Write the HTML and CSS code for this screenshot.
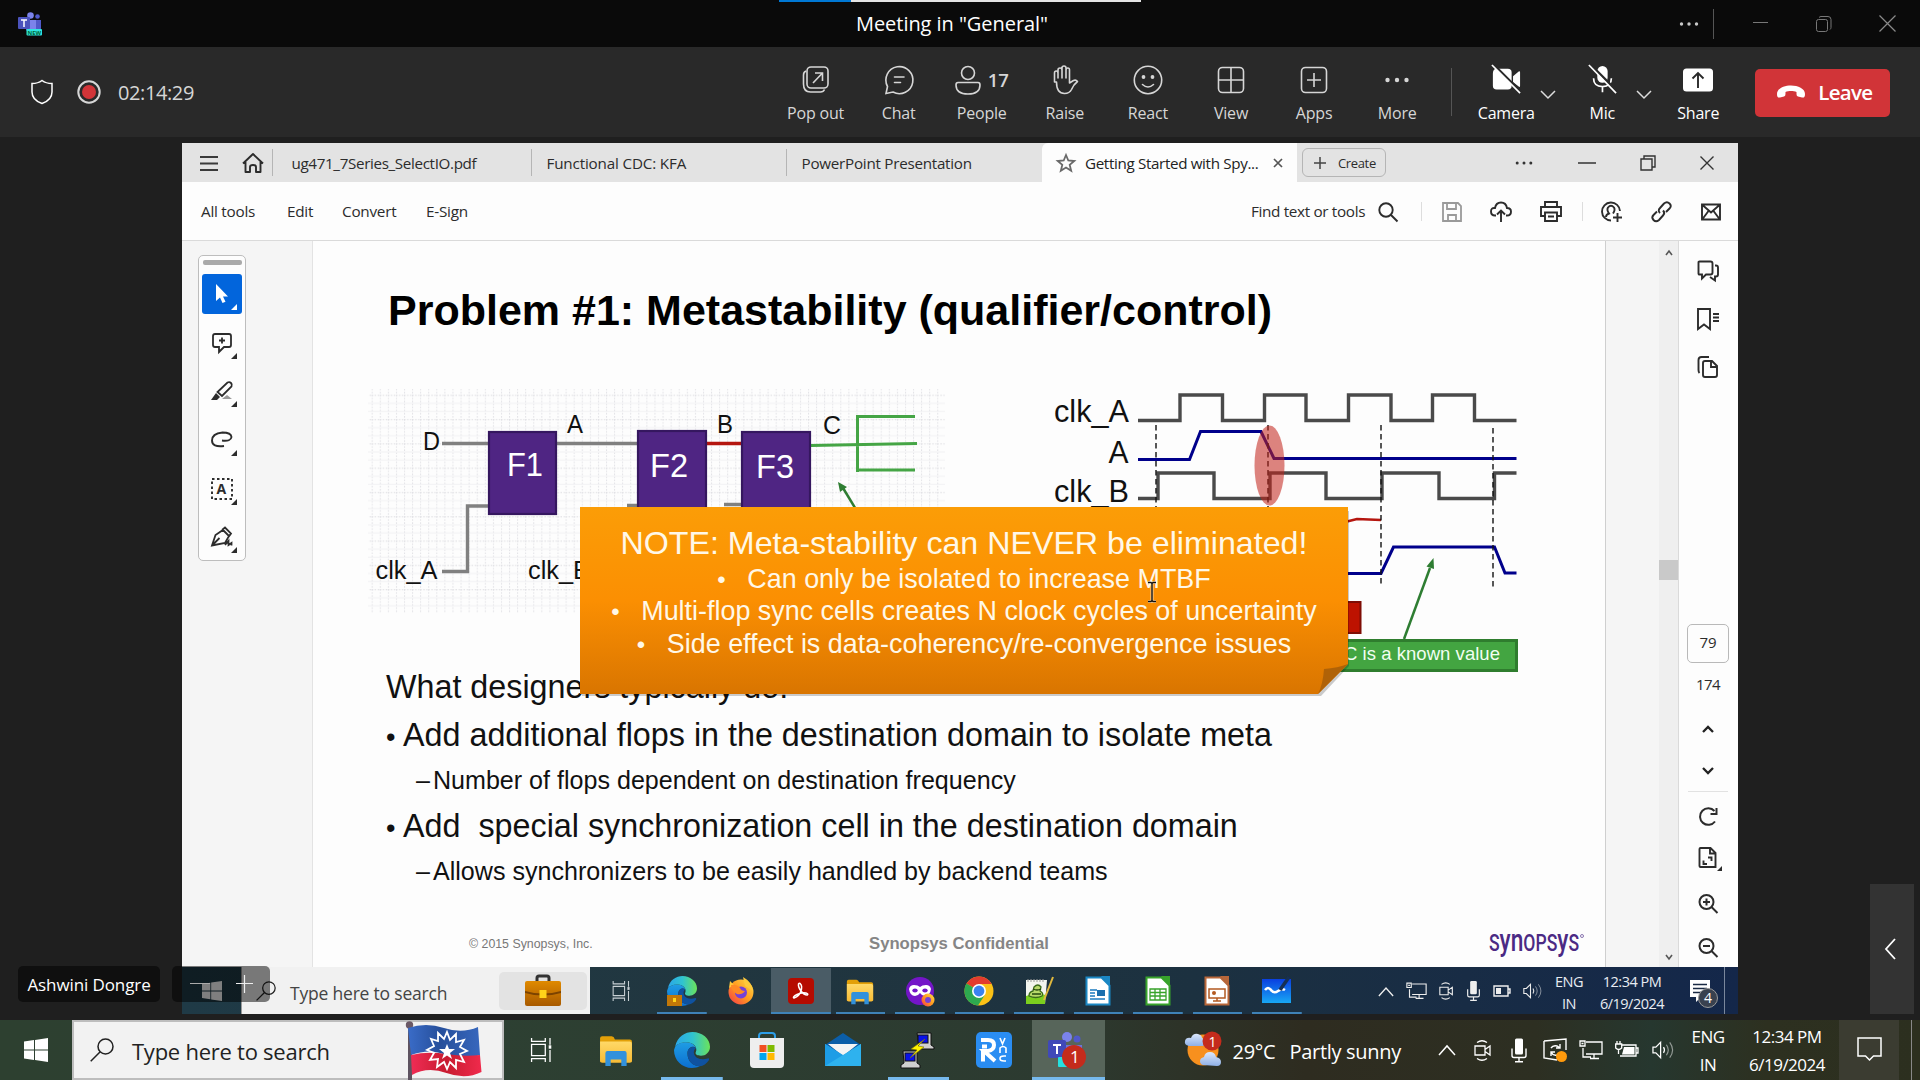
FILE: index.html
```html
<!DOCTYPE html>
<html lang="en">
<head>
<meta charset="utf-8">
<title>Meeting in "General"</title>
<link rel="stylesheet" href="styles.css">
</head>
<body>
<svg class="defs" aria-hidden="true">
  <defs>
    <linearGradient id="edgeA" x1="0" y1="0" x2="1" y2="0"><stop offset="0" stop-color="#2aa6e8"/><stop offset=".5" stop-color="#30c3d0"/><stop offset="1" stop-color="#6be35a"/></linearGradient>
    <linearGradient id="edgeB" x1="0" y1="0" x2="0" y2="1"><stop offset="0" stop-color="#1f9de4"/><stop offset="1" stop-color="#0c6fd0"/></linearGradient>
    <linearGradient id="fold" x1="0" y1="0" x2="0" y2="1"><stop offset="0" stop-color="#ffd968"/><stop offset="1" stop-color="#f8bb35"/></linearGradient>
    <linearGradient id="bag" x1="0" y1="0" x2="0" y2="1"><stop offset="0" stop-color="#e08a00"/><stop offset="1" stop-color="#a85a00"/></linearGradient>
    <linearGradient id="wb" x1="0" y1="0" x2="0" y2="1"><stop offset="0" stop-color="#0a3fe0"/><stop offset="1" stop-color="#18a8f5"/></linearGradient>
    <linearGradient id="flagB" x1="0" y1="0" x2="1" y2="0"><stop offset="0" stop-color="#3a6cc8"/><stop offset=".45" stop-color="#264f9b"/><stop offset="1" stop-color="#3767bd"/></linearGradient>
    <linearGradient id="flagR" x1="0" y1="0" x2="1" y2="0"><stop offset="0" stop-color="#f02c55"/><stop offset=".5" stop-color="#c81c30"/><stop offset="1" stop-color="#f02a4c"/></linearGradient>
    <linearGradient id="fox" x1="1" y1="0" x2="0" y2="1"><stop offset="0" stop-color="#ffe14a"/><stop offset=".5" stop-color="#ff9a1f"/><stop offset="1" stop-color="#f4344c"/></linearGradient>
    <linearGradient id="cloud" x1="0" y1="0" x2="0" y2="1"><stop offset="0" stop-color="#dbe8fb"/><stop offset="1" stop-color="#8fb0e6"/></linearGradient>
    <pattern id="grid" width="8.08" height="24.3" patternUnits="userSpaceOnUse"><path d="M.5 0V24.3" stroke="#e2e2e6" stroke-width="1" stroke-dasharray="1.5 1.5"/><path d="M0 6.5H8.08" stroke="#dcdce0" stroke-dasharray="1.5 1.5"/><path d="M0 14.5H8.08M0 22.5H8.08" stroke="#f1f1f3"/></pattern>
    <symbol id="i-edge" viewBox="0 0 32 32"><path d="M1 13C2.500 11 6 9 11 9c5 0 8 3 8.500 5.500C17 11.500 12 14 12 19c0 7 5 11 11 11.500-2 1-4.500 1.500-7 1.500C7 32 0 25 0 16z" fill="url(#edgeB)"/><path d="M12 19c0-5.500 5-7 7.500-4.500-1.500 1-2.500 3-1.500 5.500 1.500 4 7 5 12 3.500 1-.5 1.500.5 1 1.500-2 3-5 5-8 5.500C17 30 12 26 12 19z" fill="#0f52a0"/><path d="M1 13C3 4 10 0 16.500 0 25 0 32 6 32 13c0 5-4 8-8 8s-5.500-1.500-4.500-3.500C21 14 18 9 11 9 6 9 2.500 11 1 13z" fill="url(#edgeA)"/></symbol>
    <symbol id="i-folder" viewBox="0 0 32 32"><path d="M1 5q0-2 2-2h9q2 0 3 3h14q2 0 2 2v19H1z" fill="#e3a008"/><path d="M1 8h28q2 0 2 2v16q0 2-2 2H3q-2 0-2-2z" fill="url(#fold)"/><path d="M6 31V19q0-2 2-2h16q2 0 2 2v12h-5v-6H11v6z" fill="#3291dc"/></symbol>
    <symbol id="i-taskview" viewBox="0 0 24 28"><path d="M1 0v4h16V0M1 28v-4h16v4M1 7.500h16v13H1zM22.500 0v8M22.500 14v14" fill="none" stroke="currentColor" stroke-width="1.500"/><path d="M21 8.500h3v4h-3z" fill="currentColor"/></symbol>
    <symbol id="i-win" viewBox="0 0 24 24"><path d="M0 3.500 10 2v9.500H0zM11 1.900 24 0v11.500H11zM0 12.500h10V22L0 20.500zM11 12.500h13V24l-13-1.900z" fill="currentColor"/></symbol>
    <symbol id="i-loupe" viewBox="0 0 24 24"><circle cx="15.500" cy="8.500" r="7.500" fill="none" stroke="currentColor" stroke-width="1.500"/><path d="M10.200 13.800.7 23.300" stroke="currentColor" stroke-width="1.500"/></symbol>
    <symbol id="i-meet" viewBox="0 0 18 22"><path d="M1 6.500h10v9H1zM11 10l5-3.500v9L11 12M3 3q5-3.500 10 0M3 19q5 3.500 10 0" fill="none" stroke="currentColor" stroke-width="1.300"/></symbol>
    <symbol id="i-mic" viewBox="0 0 16 24"><rect x="4" y="0" width="8" height="16" rx="1.500" fill="currentColor"/><path d="M1 10v7q0 2 2 2h10q2 0 2-2v-7M8 19v4M4 23.300h8" fill="none" stroke="currentColor" stroke-width="1.400"/></symbol>
    <symbol id="i-monitor" viewBox="0 0 24 20"><path d="M7 2h16v12H7M4 8v9h8M15 14v4M11 18.500h9M1 1h5v5H1zM2.500 3.500h2" fill="none" stroke="currentColor" stroke-width="1.300"/></symbol>
    <symbol id="i-vol" viewBox="0 0 24 20"><path d="M1 7h3l5-5v16l-5-5H1z" fill="none" stroke="currentColor" stroke-width="1.300"/><path d="M12 7q2 3 0 6" fill="none" stroke="currentColor" stroke-width="1.300"/><path d="M15 4.500q4 5.500 0 11M18.500 2q6 8 0 16" fill="none" stroke="currentColor" stroke-width="1.200" opacity=".5"/></symbol>
    <symbol id="i-up" viewBox="0 0 18 12"><path d="m1 11 8-9 8 9" fill="none" stroke="currentColor" stroke-width="1.500"/></symbol>
    <symbol id="i-doc" viewBox="0 0 26 30"><path d="M1.500 1.500h15l8 8v19h-23z" fill="#fff" stroke="currentColor" stroke-width="2"/><path d="M16 0h9v10z" fill="currentColor"/></symbol>
  </defs>
</svg>

<header class="titlebar">
  <svg class="teams-logo" viewBox="0 0 24 24"><circle cx="12.500" cy="3.500" r="3.300" fill="#7b83eb"/><circle cx="19.500" cy="4.500" r="2.300" fill="#5059c9"/><path d="M16 8h7v8q0 3-3 3h-4z" fill="#5059c9"/><path d="M8 8h10v9q-1 4-5 4t-5-4z" fill="#7b83eb"/><rect y="5" width="12" height="12" rx="1" fill="#4b53bc"/><path d="M3 8h6M6 8v7" stroke="#fff" stroke-width="1.500"/><rect x="8.500" y="17" width="15.500" height="6.500" rx="1" fill="#2fe5e0"/><text x="9.500" y="22.600" font-size="6" font-weight="700" textLength="13.500" lengthAdjust="spacingAndGlyphs" fill="#063">NEW</text></svg>
  <div class="share-line"><i></i></div>
  <h1>Meeting in "General"</h1>
  <div class="wincontrols">
    <svg width="20" height="6" viewBox="0 0 20 6"><g fill="#c8c8c8"><circle cx="2.500" cy="3" r="1.700"/><circle cx="10" cy="3" r="1.700"/><circle cx="17.500" cy="3" r="1.700"/></g></svg>
    <i class="rule"></i>
    <svg width="16" height="16"><path d="M0 6.500h15" stroke="#777"/></svg>
    <svg width="16" height="16" fill="none" stroke="#777"><rect x=".5" y="3.500" width="11" height="12" rx="2"/><path d="M3 1.500q1-1 2-1h7q3 0 3 3v8q0 1-1 2"/></svg>
    <svg width="17" height="17"><path d="m.5.500 16 16m0-16-16 16" stroke="#8a8a8a" stroke-width="1.200"/></svg>
  </div>
</header>

<nav class="callbar">
  <svg class="shield" width="22" height="26" viewBox="0 0 22 26" fill="none" stroke="#fff" stroke-width="1.500"><path d="M11 1.500q4 3 10 3V13q0 8-10 11.500Q1 21 1 13V4.500q6 0 10-3z"/></svg>
  <svg class="rec" width="24" height="24"><circle cx="12" cy="12" r="10.700" fill="none" stroke="#d6d6d6" stroke-width="2"/><circle cx="12" cy="12" r="7" fill="#d13438"/></svg>
  <span class="timer">02:14:29</span>
  <div class="actions">
    <div class="act"><svg width="28" height="30" fill="none" stroke="currentColor" stroke-width="1.600"><rect x="5" y="2" width="21" height="21" rx="4"/><path d="M4 6q-2.500 1-2.500 4v9q0 8 7 8h10q3 0 4-2.500M11 18 20.500 8M13 8h7.500v8"/></svg><span>Pop out</span></div>
    <div class="act"><svg width="30" height="30" fill="none" stroke="currentColor" stroke-width="1.600" stroke-linecap="round"><path d="M2 28.500 3.500 21.500A13.500 13.500 0 1 1 9 27zM10.500 12h9.500M10.500 17.500h6"/></svg><span>Chat</span></div>
    <div class="act people"><div><svg width="26" height="30" fill="none" stroke="currentColor" stroke-width="1.600"><circle cx="13" cy="8" r="6.500"/><path d="M3 17.500h20q2 0 2 2.500 0 9-12 9T1 20q0-2.500 2-2.500z"/></svg><b>17</b></div><span>People</span></div>
    <div class="act"><svg width="28" height="30" fill="none" stroke="currentColor" stroke-width="1.600" stroke-linejoin="round"><path d="M3.500 17V8q0-2 1.700-2T7 8v5V5q0-2 2-2t2 2v8V3q0-2 2-2t2 2v10V5q0-2 1.800-2t1.700 2v13l4-2.500q2.500-1 4 1-4 3-6 8-2 4-7 4-8 0-8-11.500z"/></svg><span>Raise</span></div>
    <div class="act"><svg width="30" height="30" fill="none" stroke="currentColor" stroke-width="1.600" stroke-linecap="round"><circle cx="15" cy="15" r="13.700"/><path d="M9.500 19.500q5.500 5 11 0"/><g fill="currentColor" stroke="none"><circle cx="10.500" cy="12" r="1.900"/><circle cx="19.500" cy="12" r="1.900"/></g></svg><span>React</span></div>
    <div class="act"><svg width="28" height="30" fill="none" stroke="currentColor" stroke-width="1.600"><rect x="1.500" y="2.500" width="25" height="25" rx="4"/><path d="M14 2.500v25M1.500 15h25"/></svg><span>View</span></div>
    <div class="act"><svg width="28" height="30" fill="none" stroke="currentColor" stroke-width="1.600"><rect x="1.500" y="2.500" width="25" height="25" rx="4"/><path d="M14 8v14M7 15h14"/></svg><span>Apps</span></div>
    <div class="act"><svg width="28" height="30" fill="currentColor"><circle cx="4.500" cy="15" r="2.200"/><circle cx="14" cy="15" r="2.200"/><circle cx="23.500" cy="15" r="2.200"/></svg><span>More</span></div>
  </div>
  <i class="rule"></i>
  <div class="devices">
    <div class="act cam"><svg width="34" height="32" viewBox="0 0 34 32"><path d="M3 9q0-5 4-5h12q4 0 4 4v14q0 4-4 4H7q-4 0-4-4zM24.500 12l6-5q1.500-1 1.500 1v14q0 2-1.500 1l-6-5z" fill="#fff"/><path d="M4 0 34 30" stroke="#292929" stroke-width="3"/><path d="M2 0 32 30" stroke="#fff" stroke-width="1.800"/></svg><span>Camera</span></div>
    <svg class="chev" width="16" height="10"><path d="m1 1 7 7 7-7" fill="none" stroke="#ddd" stroke-width="1.500"/></svg>
    <div class="act mic"><svg width="32" height="32" viewBox="0 0 32 32"><rect x="11" y="1" width="11" height="18" rx="5.500" fill="#fff"/><path d="M7 14q0 9 9.500 9t9.500-9M16.500 23v6" fill="none" stroke="#fff" stroke-width="1.800"/><path d="m4 0 30 30" stroke="#292929" stroke-width="3"/><path d="m2 0 29 30" stroke="#fff" stroke-width="1.800"/></svg><span>Mic</span></div>
    <svg class="chev" width="16" height="10"><path d="m1 1 7 7 7-7" fill="none" stroke="#ddd" stroke-width="1.500"/></svg>
    <div class="act share"><svg width="30" height="30"><rect y="3.500" width="30" height="23" rx="3.500" fill="#fff"/><path d="M15 23V8M9.500 13.500 15 8l5.500 5.500" fill="none" stroke="#292929" stroke-width="1.900"/></svg><span>Share</span></div>
  </div>
  <button class="leave"><svg width="30" height="16" viewBox="0 0 30 16"><path d="M15 1.500c7 0 14 3 14 8.500 0 3-1 4-3 3.500l-4-1c-1.500-.5-1.500-1.500-1.500-4.500-3-1.300-8-1.300-11 0 0 3 0 4-1.500 4.500l-4 1C2 14 1 13 1 10c0-5.500 7-8.500 14-8.500z" fill="#fff"/></svg>Leave</button>
</nav>

<main class="stage">
  <section class="shared">
    <div class="tabs">
      <svg class="burger" width="18" height="16"><path d="M0 2h18M0 8.500h18M0 15h18" stroke="#3a3a3a" stroke-width="1.800"/></svg>
      <svg class="home" width="22" height="20" fill="none" stroke="#2c2c2c" stroke-width="1.900" stroke-linejoin="round"><path d="M1 10.500 11 1l10 9.500M3.500 9v10h4.500v-5q0-2 3-2t3 2v5h4.500V9"/></svg>
      <div class="tab t1">ug471_7Series_SelectIO.pdf</div>
      <div class="tab t2">Functional CDC: KFA</div>
      <div class="tab t3">PowerPoint Presentation</div>
      <div class="tab on"><svg width="20" height="20"><path d="m10 2 2.300 5.500 6 .5-4.600 3.900 1.500 5.900L10 14.600l-5.200 3.200 1.500-5.900L1.700 8l6-.5z" fill="none" stroke="#6a6a6a" stroke-width="1.800"/></svg><span>Getting Started with Spy...</span><svg class="tx" width="10" height="10"><path d="m1 1 8 8m0-8-8 8" stroke="#555" stroke-width="1.700"/></svg></div>
      <div class="create"><svg width="12" height="12"><path d="M6 0v12M0 6h12" stroke="#444" stroke-width="1.500"/></svg>Create</div>
      <div class="appctl">
        <svg width="18" height="6" fill="#333"><circle cx="2.200" cy="3" r="1.500"/><circle cx="9" cy="3" r="1.500"/><circle cx="15.800" cy="3" r="1.500"/></svg>
        <svg width="18" height="6"><path d="M0 3h18" stroke="#333" stroke-width="1.500"/></svg>
        <svg width="16" height="16" fill="none" stroke="#333" stroke-width="1.400"><path d="M1 4h11v11H1zM4 4V1h11v11h-3"/></svg>
        <svg width="14" height="14"><path d="m.5.500 13 13m0-13-13 13" stroke="#333" stroke-width="1.400"/></svg>
      </div>
    </div>
    <div class="menu">
      <span class="m1">All tools</span><span class="m2">Edit</span><span class="m3">Convert</span><span class="m4">E-Sign</span>
      <span class="find">Find text or tools</span>
      <div class="micons">
        <svg class="s" width="20" height="20" fill="none" stroke="#2c2c2c" stroke-width="1.900"><circle cx="8" cy="8" r="6.700"/><path d="m13 13 6.500 6.500"/></svg>
        <i></i>
        <svg width="20" height="20" fill="none" stroke="#9a9a9a" stroke-width="1.800"><path d="M1 1h15l3 3v15H1zM5 1v6h9V1M6 19v-6h8v6"/></svg>
        <svg width="22" height="22" fill="none" stroke="#2c2c2c" stroke-width="1.900"><path d="M6 14.500H5q-4 0-4-4T5 7q1-5.500 6-5.500T17 7q4 0 4 3.700T17 14.500h-1M11 21V10M7 13.500l4-4 4 4"/></svg>
        <svg width="22" height="21" fill="none" stroke="#2c2c2c" stroke-width="1.900"><path d="M5 6V1h12v5M5 15H1V6h20v9h-4M5 11.500h12V20H5zM8 15.500h6"/></svg>
        <i class="b"></i>
        <svg width="22" height="22" fill="none" stroke="#2c2c2c" stroke-width="1.900"><path d="M19 10A9 9 0 1 0 10 19.500M5 16q0-2.500 3-3.500Q5.500 9 7 6.500q3-3.500 6 0 1.500 2.500-1 6M16.500 12v9M12 16.500h9"/></svg>
        <svg width="22" height="22" fill="none" stroke="#2c2c2c" stroke-width="1.900"><path d="m9 12q-2.500-2.500 0-5l4-4.500q3-2.500 5.500 0t0 5L15 11M12 9.500q2.500 2.500 0 5L8 19q-3 2.500-5.500 0t0-5L6 10.500"/></svg>
        <svg width="20" height="18" fill="none" stroke="#2c2c2c" stroke-width="1.900"><path d="M1 1.500h18v15H1zM1.500 2l8.500 7.500L18.500 2M1.500 16l6-8M18.500 16l-6-8"/></svg>
      </div>
    </div>

    <div class="viewer">
      <div class="gutter">
        <div class="palette">
          <i class="grip"></i>
          <div class="tool sel"><svg width="20" height="22"><path d="M4 1v17l4-3.500 2.500 5.500 3-1.200L11 13.500h5z" fill="#fff"/></svg></div>
          <div class="tool"><svg width="20" height="20" fill="none" stroke="#2c2c2c" stroke-width="1.800"><path d="M3 1h14q2 0 2 2v9q0 2-2 2h-5l-5 5v-5H3q-2 0-2-2V3q0-2 2-2zM10 4.500v6M7 7.500h6"/></svg></div>
          <div class="tool"><svg width="22" height="20" fill="none" stroke="#2c2c2c" stroke-width="1.800"><path d="M11 18h10l-5-4z" fill="#9a9a9a" stroke="none"/><path d="M16.500 1.500q2-1 3.500.5t.5 3.500L11 15l-4.500-4z"/><path d="m5 12 4 4-3 3H0z" fill="#2c2c2c" stroke="none"/></svg></div>
          <div class="tool"><svg width="22" height="18" fill="none" stroke="#2c2c2c" stroke-width="1.900"><path d="M11 9.500q9 1 9.500-3.500Q20 1.500 11.500 1.500 1 2.500 1 9.500q0 7 12 5.500"/></svg></div>
          <div class="tool"><svg width="22" height="22"><rect x="1" y="1" width="20" height="20" fill="none" stroke="#2c2c2c" stroke-width="1.900" stroke-dasharray="2.500 2.500"/><text x="5.500" y="16" font-size="14" font-weight="700" fill="#2c2c2c">A</text></svg></div>
          <div class="tool"><svg width="22" height="20" fill="none" stroke="#2c2c2c" stroke-width="1.800"><path d="M1 18.500 4.500 8 12 3l6 6-4 7zM1 18.500l7.500-7.500M11 3l3-2.500 6 6-2.500 3.500M14 18l3.500-4v4l3-2v2.500"/></svg></div>
        </div>
      </div>

      <article class="slide">
        <h2>Problem #1: Metastability (qualifier/control)</h2>
        <div class="figures">
          <svg class="circuit" viewBox="368 389 577 224" width="577" height="224">
            <rect x="368" y="389" width="577" height="224" fill="url(#grid)"/>
            <g fill="none" stroke="#808080" stroke-width="3.400"><path d="M442 443.500h46M557 443.500h80M442 571.500h25.500V506H488M627 505.500h10M724 504.500h17"/></g>
            <path d="M707 443.500h34" stroke="#b5160f" stroke-width="3.400"/>
            <path d="m811 445.500 106-2M857.500 415v57M857 416.500h58M857 470h58" fill="none" stroke="#45a545" stroke-width="3"/>
            <path d="m860 516-17-28" stroke="#2e7d32" stroke-width="2.500"/><path d="m838 482 9 5-7 5z" fill="#2e7d32"/>
            <g fill="#4f2583" stroke="#35175f" stroke-width="2.200"><rect x="489" y="432" width="67" height="82"/><rect x="638" y="431" width="68" height="83"/><rect x="742" y="432" width="68" height="82"/></g>
            <g fill="#fff" font-size="32.500"><text x="507" y="476" textLength="36" lengthAdjust="spacingAndGlyphs">F1</text><text x="650" y="477" textLength="38" lengthAdjust="spacingAndGlyphs">F2</text><text x="756" y="478" textLength="38" lengthAdjust="spacingAndGlyphs">F3</text></g>
            <g fill="#111" font-size="25.500"><text x="423" y="450" textLength="17" lengthAdjust="spacingAndGlyphs">D</text><text x="567" y="433" textLength="16" lengthAdjust="spacingAndGlyphs">A</text><text x="717" y="433" textLength="16" lengthAdjust="spacingAndGlyphs">B</text><text x="823" y="434" textLength="18" lengthAdjust="spacingAndGlyphs">C</text><text x="375.500" y="579" textLength="62" lengthAdjust="spacingAndGlyphs">clk_A</text><text x="528" y="579" textLength="62" lengthAdjust="spacingAndGlyphs">clk_B</text></g>
          </svg>
          <svg class="timing" viewBox="1050 389 470 285" width="470" height="285">
            <g fill="#111" font-size="31"><text x="1054" y="422" textLength="75" lengthAdjust="spacingAndGlyphs">clk_A</text><text x="1108.500" y="463" textLength="20" lengthAdjust="spacingAndGlyphs">A</text><text x="1054" y="502" textLength="75" lengthAdjust="spacingAndGlyphs">clk_B</text></g>
            <path d="M1138 420.500h42V395h42.500v25.500h42V395h41.500v25.500h42.500V395h42.500v25.500h41.500V395h42v25.500h42M1138 498.500h20V473h56v25.500h56V473h56v25.500h56V473h57v25.500h55.500V473h22" fill="none" stroke="#4a4a4a" stroke-width="3.400"/>
            <path d="M1138 459.500h51.500l11-28h60.500l13 27h242.500M1340 573.500h41l12.500-26.500h101l10.500 26h11.500" fill="none" stroke="#00008b" stroke-width="3"/>
            <path d="m1345 522 12-3 24 1" fill="none" stroke="#b5160f" stroke-width="2.600"/>
            <path d="M1156 425v90M1268 425v90M1381 425v159M1493 428v160" stroke="#111" stroke-width="1.400" stroke-dasharray="5.500 3.500"/>
            <ellipse cx="1269.500" cy="465.500" rx="15" ry="40" fill="#c3231b" fill-opacity=".56"/>
            <rect x="1330" y="602" width="30.500" height="31" fill="#bd1200" stroke="#7e0d05" stroke-width="2"/>
            <rect x="1331" y="640.500" width="185.500" height="30" fill="#43a541" stroke="#2f7d2e" stroke-width="3"/>
            <path d="m1404 639 26-71" stroke="#2e7d32" stroke-width="2.500"/><path d="m1433.500 558 .5 11-7.500-2.500z" fill="#2e7d32"/>
            <text x="1344" y="660" font-size="18.500" fill="#f2fff2" textLength="156">C is a known value</text>
          </svg>
        </div>
        <div class="copy">
          <p class="l1">What designers typically do:</p>
          <p class="l2"><b>•</b>Add additional flops in the destination domain to isolate meta</p>
          <p class="l3"><i>–</i>Number of flops dependent on destination frequency</p>
          <p class="l2"><b>•</b>Add&nbsp; special synchronization cell in the destination domain</p>
          <p class="l3"><i>–</i>Allows synchronizers to be easily handled by backend teams</p>
        </div>
        <footer>
          <span class="copyright">© 2015 Synopsys, Inc.</span>
          <strong>Synopsys Confidential</strong>
          <svg class="brand" width="96" height="28"><text x="0" y="21" textLength="90" lengthAdjust="spacingAndGlyphs">S<tspan class="tall">yn</tspan>OPS<tspan class="tall">y</tspan>S</text><circle cx="93" cy="6" r="1.500" fill="none" stroke="#8a76b0"/></svg>
        </footer>
        <aside class="note">
          <svg class="paper" width="780" height="200"><defs><linearGradient id="pg" x1="0" y1="0" x2="0" y2="1"><stop offset="0" stop-color="#fb9d07"/><stop offset=".5" stop-color="#fb8f02"/><stop offset="1" stop-color="#d97500"/></linearGradient></defs><path d="M2 4h767v155l-28 30H2z" fill="#000" opacity=".2"/><path d="M0 0h768v157l-30 30H0z" fill="url(#pg)"/><path d="M768 157q-10 4-24 5-1 15-6 25z" fill="#b06207"/></svg>
          <div class="notetext">
            <h3>NOTE: Meta-stability can NEVER be eliminated!</h3>
            <p><b>•</b>Can only be isolated to increase MTBF</p>
            <p><b>•</b>Multi-flop sync cells creates N clock cycles of uncertainty</p>
            <p><b>•</b>Side effect is data-coherency/re-convergence issues</p>
          </div>
          <svg class="ibeam" width="10" height="22"><path d="M1 1.500h3l1 1 1-1h3M5 2.500v17M1 20.500h3l1-1 1 1h3" fill="none" stroke="#fff" stroke-width="3" opacity=".6"/><path d="M1 1.500h3l1 1 1-1h3M5 2.500v17M1 20.500h3l1-1 1 1h3" fill="none" stroke="#111" stroke-width="1.400"/></svg>
        </aside>
      </article>

      <div class="backdrop"></div>
      <div class="scroll">
        <svg width="8" height="7"><path d="m1 6 3-4 3 4" fill="none" stroke="#555" stroke-width="1.600"/></svg>
        <i></i>
        <svg width="8" height="7"><path d="m1 1 3 4 3-4" fill="none" stroke="#555" stroke-width="1.600"/></svg>
      </div>
      <div class="rail">
        <svg class="r1" width="22" height="22" fill="none" stroke="#2c2c2c" stroke-width="1.900"><path d="M2.500 1.500h11q2 0 2 2v9q0 2-2 2H9l-4 4v-4H2.500q-1 0-1-1v-11q0-1 1-1zM18 5.500h1q2 0 2 2v7q0 2-2 2h-1v4l-5-3.500"/></svg>
        <svg class="r2" width="22" height="22" fill="none" stroke="#2c2c2c" stroke-width="1.900"><path d="M1 1h12v20l-6-4.500L1 21zM16 6h6M16 9.500h6M16 13h6"/></svg>
        <svg class="r3" width="22" height="22" fill="none" stroke="#2c2c2c" stroke-width="1.900"><path d="M6 7q0-2 2-2h7l5 5v9q0 2-2 2H8q-2 0-2-2zM14 5v6h6M2.500 17Q1.500 16 1.500 14V4q0-3 3-3H12"/></svg>
        <span class="page">79</span>
        <span class="total">174</span>
        <svg class="r4" width="12" height="8"><path d="m1 7 5-5 5 5" fill="none" stroke="#222" stroke-width="2.300"/></svg>
        <svg class="r5" width="12" height="8"><path d="m1 1 5 5 5-5" fill="none" stroke="#222" stroke-width="2.300"/></svg>
        <i class="hr"></i>
        <svg class="r6" width="20" height="20" fill="none" stroke="#2c2c2c" stroke-width="2"><path d="M17 14.500a8.300 8.300 0 1 1-.5-10.500M18.500 1v6h-6"/></svg>
        <svg class="r7" width="26" height="26" fill="none" stroke="#2c2c2c" stroke-width="1.900"><path d="M5.500 2h10l5 5v14h-15q-1 0-1-1V3q0-1 1-1zM15 2v5.500h5.500M13 11.500h3.500V15M12 18H8.500v-3.500"/><path d="M27 20v5h-5z" fill="#2c2c2c" stroke="none"/></svg>
        <svg class="r8" width="20" height="20" fill="none" stroke="#2c2c2c" stroke-width="2"><circle cx="8.500" cy="8" r="7"/><path d="m13.500 13 6 6M5 8h7M8.500 4.500v7"/></svg>
        <svg class="r9" width="20" height="20" fill="none" stroke="#2c2c2c" stroke-width="2"><circle cx="8.500" cy="8" r="7"/><path d="m13.500 13 6 6M5 8h7"/></svg>
      </div>
    </div>

    <div class="innerbar">
      <div class="istart"><svg width="20" height="20"><use href="#i-win"/></svg></div>
      <div class="isearch"><svg width="20" height="20"><use href="#i-loupe"/></svg><span>Type here to search</span>
        <div class="tile"><svg width="38" height="32"><path d="M13 6V3q0-2 2-2h8q2 0 2 2v3" fill="none" stroke="#333" stroke-width="3"/><rect x="1" y="6" width="36" height="25" rx="2" fill="url(#bag)"/><path d="M1 16q18 5 36 0v2q-18 5-36 0z" fill="#7c4300"/><rect x="15.500" y="15" width="7" height="8" fill="#ffd31a"/></svg></div></div>
      <div class="iapps">
        <div><svg width="20" height="20" class="pale"><use href="#i-taskview"/></svg></div>
        <div class="run"><svg width="30" height="30"><use href="#i-edge"/><rect x="0" y="19" width="15" height="11" fill="#c27708"/><rect x="6" y="22" width="3" height="4" fill="#ffd31a"/></svg></div>
        <div><svg width="28" height="30"><circle cx="14" cy="16" r="12.500" fill="url(#fox)"/><path d="M2 12 3 5l4 4zM16 1q9 5 10 14l-8-5z" fill="#ffc93b"/><circle cx="14" cy="16.500" r="6" fill="#7542d6"/><path d="M4 9q6-1 9 3 1 3 5 3-3 4-8 3-6-3-6-9z" fill="#ff8a25"/></svg></div>
        <div class="cur"><svg width="28" height="28"><rect x="1" y="1" width="26" height="26" rx="4" fill="#b50b00"/><path d="M13.500 7q2 2 .5 7t-7 7q-2-1 3-3.500t9-1.500q3 1 1 2-3 0-6-4t-2.500-7q1-1.500 2 0z" fill="none" stroke="#fff" stroke-width="1.500"/></svg></div>
        <div class="run"><svg width="28" height="28"><use href="#i-folder"/></svg></div>
        <div class="run"><svg width="30" height="32"><circle cx="15" cy="16" r="14" fill="#7415c8"/><path d="M4 14q1-4 5-4t6 2q2-2 6-2t5 4q-1 7-6 7-3 0-5-3-2 3-5 3-5 0-6-7z" fill="#fff"/><ellipse cx="10" cy="15.500" rx="2.700" ry="2" fill="#7415c8"/><ellipse cx="20" cy="15.500" rx="2.700" ry="2" fill="#7415c8"/><circle cx="23" cy="25" r="6.500" fill="url(#fox)"/><circle cx="23" cy="25" r="3" fill="#7542d6"/></svg></div>
        <div class="run"><svg width="30" height="30"><circle cx="15" cy="15" r="14.500" fill="#fbc116"/><path d="M15 15 2.500 7.500A14.500 14.500 0 0 1 27.600 8H15z" fill="#e33b2e"/><path d="M15 15 2.500 7.500A14.500 14.500 0 0 0 14 29.500l6.500-10z" fill="#2da94f"/><circle cx="15" cy="15" r="7" fill="#fff"/><circle cx="15" cy="15" r="5.400" fill="#3b82f0"/></svg></div>
        <div class="run"><svg width="30" height="30"><path d="M2 4h21l-2 24H2z" fill="#f3f5ee"/><path d="M2 20q10-4 19.500-1L21 28H2z" fill="#7ccf1e"/><path d="M5 20q0-4 4-5l1-4q4-4 7 0l-1 4q4 2 2 5-6 3-13 0z" fill="#b8d96a" stroke="#3a6a1a" stroke-width="1.300"/><path d="M9 13q4 2 8 0M8 18h9" stroke="#24480e" stroke-width="1.300" fill="none"/><path d="M29 1 20 24" stroke="#e0b83d" stroke-width="2"/><path d="M4 3v3M7 3v3M10 3v3M13 3v3M16 3v3M19 3v3" stroke="#999"/></svg></div>
        <div class="run"><svg width="26" height="30" class="c-blue"><use href="#i-doc"/><path d="M5 14h7M5 17h5M5 20h5M5 23h15" stroke="#1b7bc0" stroke-width="1.500"/><path d="M12 14h8v6h-8z" fill="#1b6fae"/></svg></div>
        <div class="run"><svg width="26" height="30" class="c-green"><use href="#i-doc"/><path d="M5 13h16v11H5zM5 16.500h16M5 20h16M10 13v11M15 13v11" fill="none" stroke="#38a32b" stroke-width="1.300"/></svg></div>
        <div class="run"><svg width="26" height="30" class="c-orange"><use href="#i-doc"/><path d="M5 13h16v9H5zM13 22v3M9 25h8" fill="none" stroke="#b35a22" stroke-width="1.500"/><circle cx="10" cy="17" r="2" fill="#b35a22"/></svg></div>
        <div class="run"><svg width="30" height="30"><rect x="0" y="3" width="29" height="24" fill="url(#wb)"/><path d="M3 14q3-4 6 0t7 1 7-1" fill="none" stroke="#fff" stroke-width="2.500"/><path d="m27 1-9 13" stroke="#163055" stroke-width="3.500"/></svg></div>
      </div>
      <div class="itray">
        <svg width="16" height="11"><use href="#i-up"/></svg>
        <svg width="21" height="18"><use href="#i-monitor"/></svg>
        <svg width="15" height="20"><use href="#i-meet"/></svg>
        <svg width="15" height="20"><use href="#i-mic"/></svg>
        <svg width="18" height="12" fill="none" stroke="#eee" stroke-width="1.400"><path d="M1 1h14v10H1zM15 4h2v4h-2"/><path d="M3 3h5v6H3z" fill="#eee" stroke="none"/></svg>
        <svg width="20" height="18"><use href="#i-vol"/></svg>
      </div>
      <div class="stack lang">ENG<br>IN</div>
      <div class="stack clock">12:34 PM<br>6/19/2024</div>
      <svg class="inotif" width="32" height="32"><path d="M1 4h20v17H12l-5 5v-5H1z" fill="#fff"/><path d="M4 8.500h14M4 12.500h14M4 16.500h9" stroke="#1a2a44" stroke-width="1.500"/><circle cx="19" cy="22" r="9.500" fill="#39414f" stroke="#999"/><text x="15" y="27" font-size="14" fill="#fff">4</text></svg>
      <i class="ipeek"></i>
    </div>
  </section>

  <div class="presenter"><span class="who">Ashwini Dongre</span><span class="ghost"><svg width="60" height="20"><path d="M0 9.500h20" stroke="#aaa"/><path d="M46 9.500h17M54.500 1v18" stroke="#eee" stroke-width="1.200"/></svg></span></div>
  <div class="drawer"><svg width="12" height="22"><path d="M11 1 2 11l9 10" fill="none" stroke="#fff" stroke-width="1.800"/></svg></div>
</main>

<footer class="taskbar">
  <div class="start"><svg width="24" height="24"><use href="#i-win"/></svg></div>
  <div class="search"><svg width="24" height="24"><use href="#i-loupe"/></svg><span>Type here to search</span>
    <svg class="flag" width="78" height="59"><path d="M5 4v55" stroke="#5e5360" stroke-width="4"/><circle cx="4.500" cy="4" r="3.700" fill="#6b5966"/><path d="M3 7q18-6 36 0t34-1l2 28q-18 7-34 0T6 34z" fill="url(#flagB)"/><path d="M6 34q17-4 35-1t34 1l1.500 17q-16 8-35 1T7 54z" fill="url(#flagR)"/><path d="m42 11 3 8 6-6v8l8-2-4 7 7 4-7 3 4 8-8-2v8l-6-6-3 7-3-7-7 5 1-8-8 1 4-7-7-3 7-4-3-7 7 2v-8l6 6z" fill="none" stroke="#fff" stroke-width="1.800"/><path d="m42 23 2 5h6l-5 4 2 6-5-3.500L37 38l2-6-5-4h6z" fill="#fff"/></svg>
  </div>
  <div class="apps">
    <div><svg width="24" height="24" class="white"><use href="#i-taskview"/></svg></div>
    <div><svg width="34" height="34"><use href="#i-folder"/></svg></div>
    <div class="run"><svg width="36" height="36"><use href="#i-edge"/></svg></div>
    <div><svg width="36" height="36"><path d="M10 9V4q0-3 3-3h10q3 0 3 3v5" fill="none" stroke="#2d9ee8" stroke-width="2"/><path d="M1 6h34v26q0 4-4 4H5q-4 0-4-4z" fill="#eee"/><path d="M10.500 13h7v7h-7z" fill="#f25022"/><path d="M18.500 13h7v7h-7z" fill="#7fba00"/><path d="M10.500 21h7v7h-7z" fill="#00a4ef"/><path d="M18.500 21h7v7h-7z" fill="#ffb900"/></svg></div>
    <div><svg width="36" height="34"><path d="M18 0 36 12v8H0v-8z" fill="#0b5ea8"/><path d="M3 11h30L18 23z" fill="#f4f4f4"/><path d="m0 11 18 12 18-12v22H0z" fill="#3cc3f2"/><path d="m0 11 36 22H0z" fill="#1d9de6"/><path d="M0 33 36 11v22z" fill="#2eb2ee"/></svg></div>
    <div class="run"><svg width="36" height="36"><g stroke="#111"><path d="M17 1h14v12l3 2v2H15l4-4z" fill="#cfcfcf"/><rect x="18" y="3" width="10" height="8" fill="#0a12e8"/><path d="M3 19h14v12l3 2v3H1v-3l3-2z" fill="#cfcfcf"/><rect x="5" y="21" width="10" height="8" fill="#0a12e8"/></g><path d="m25 7-14 10 6 1-7 8 14-11-6-1z" fill="#fff200" stroke="#776f00" stroke-width=".6"/></svg></div>
    <div><svg width="36" height="36"><rect width="36" height="36" rx="5" fill="#2a8df2"/><path d="M5 8h7q6 0 6 5t-6 6H8l11 10M6 14.500h5M7 19v10.500" fill="none" stroke="#fff" stroke-width="4"/><path d="m24 6 2.500 6L29 6M24 21v-5q3-3 6 0v5M30 24h-2q-4 0-4 2.500t4 2.500h2" fill="none" stroke="#fff" stroke-width="1.600"/></svg></div>
    <div class="cur"><svg width="40" height="38"><circle cx="21" cy="6" r="5" fill="#7b83eb"/><circle cx="31" cy="8" r="3.500" fill="#5059c9"/><path d="M19 14h17v12H19z" fill="#6b73d8"/><rect x="2" y="9" width="18" height="18" rx="2" fill="#4049b8"/><path d="M7 14h8M11 14v9" stroke="#fff" stroke-width="2"/><rect x="12" y="26" width="9" height="10" rx="1" fill="#25e0e0"/><circle cx="28" cy="26" r="12" fill="#c42b1c"/><text x="24" y="32" font-size="17" fill="#fff">1</text></svg></div>
  </div>
  <div class="weather"><svg width="40" height="38"><circle cx="19" cy="19" r="15.500" fill="#f7901e"/><path d="M5 15q-5-1-4-5t6-3q2-5 7-4 4 1 4 4 4 1 3 5 0 3-3 3z" fill="url(#cloud)"/><path d="M19 34q-3-1-3-4t4-4q1-5 6-5t6 5q5 1 5 5t-4 4z" fill="url(#cloud)"/><circle cx="28" cy="10" r="9.500" fill="#c42b1c"/><text x="24.500" y="15.500" font-size="14" fill="#fff">1</text></svg><span class="deg">29°C</span><span>Partly sunny</span></div>
  <div class="tray">
    <svg width="18" height="12"><use href="#i-up"/></svg>
    <svg width="18" height="23"><use href="#i-meet"/></svg>
    <svg width="16" height="25"><use href="#i-mic"/></svg>
    <svg width="24" height="24" fill="none" stroke="#fff" stroke-width="1.400"><path d="M1 3 23 1v11M14 22 1 20V3M8 10q2-3 6-2l3 2M17 6v4h-4M8 18v-4h4M8 14q2 4 6 3"/><circle cx="18.500" cy="18.500" r="5.500" fill="#ff9a0c" stroke="none"/></svg>
    <svg width="24" height="20"><use href="#i-monitor"/></svg>
    <svg width="24" height="18" fill="none" stroke="#fff" stroke-width="1.300"><path d="M7 4h14v11H5M21 7h2v5h-2M2 0v3M5 0v3M.7 3h6v4q-3 3-6 0zM3.500 9v4"/><path d="M9 6h10.500v7.500H7z" fill="#fff" stroke="none"/></svg>
    <svg width="23" height="20"><use href="#i-vol"/></svg>
  </div>
  <div class="stack lang">ENG<br>IN</div>
  <div class="stack clock">12:34 PM<br>6/19/2024</div>
  <div class="notif"><svg width="25" height="26"><path d="M1 1h23v18h-7.500l-4 4-4-4H1z" fill="none" stroke="#fff" stroke-width="1.500"/></svg></div>
  <i class="peek"></i>
</footer>
</body>
</html>
```
FILE: styles.css
```css
* { box-sizing: border-box; }
body { margin: 0; width: 1920px; height: 1080px; overflow: hidden; background: #1f1f1f; color: #fff; font-family: "Open Sans", "Noto Sans", sans-serif; white-space: nowrap; }
svg { display: block; flex: none; overflow: visible; }
.defs { position: absolute; width: 0; height: 0; }
h1, h2, h3, p { margin: 0; font-weight: 400; }

/* title bar */
.titlebar { position: relative; display: flex; align-items: center; height: 47px; background: #0a0a0a; }
.teams-logo { width: 24px; height: 24px; margin-left: 18px; }
.share-line { position: absolute; left: 779px; top: 0; width: 362px; height: 2px; background: #e4e4e4; }
.share-line i { display: block; width: 72px; height: 2px; background: #0078d4; }
.titlebar h1 { flex: none; width: 194px; margin-left: 814px; font-size: 20px; letter-spacing: -.05px; }
.wincontrols { display: flex; align-items: center; margin-left: 629px; }
.wincontrols .rule { width: 1px; height: 30px; margin: 0 39px 0 14px; background: #555; }
.wincontrols svg + svg { margin-left: 47px; }

/* call controls */
.callbar { display: flex; align-items: center; height: 90px; background: #292929; color: #d6d6d6; }
.shield { margin-left: 31px; }
.rec { margin-left: 24px; }
.timer { width: 90px; margin-left: 17px; font-size: 20px; letter-spacing: -.4px; }
.actions { display: flex; margin-left: 566px; }
.act { display: flex; flex-direction: column; align-items: center; width: 83.100px; font-size: 16px; letter-spacing: -.2px; line-height: 22px; gap: 7px; padding-top: 5px; }
.act > svg { height: 30px; }
.people > div { display: flex; align-items: center; gap: 7px; height: 30px; }
.people b { font-size: 18.500px; font-weight: 600; }
.callbar > .rule { width: 1.500px; height: 48px; margin-left: 12px; background: #555; }
.devices { display: flex; align-items: center; color: #fff; }
.cam { width: 60px; margin-left: 24px; }
.chev { margin: 6px 0 0 4px; }
.mic { width: 40px; margin-left: 26px; }
.mic + .chev { margin-left: 14px; }
.share { width: 50px; margin-left: 21px; }
.leave { display: flex; align-items: center; gap: 12px; width: 135px; height: 48px; margin: 1px 0 0 32px; padding: 0 0 2px 21px; border: 0; border-radius: 5px; background: #d13438; color: #fff; font: 600 20.500px "Open Sans", sans-serif; letter-spacing: -.7px; }

/* shared screen */
.stage { position: relative; height: 883px; padding: 6px 182px; }
.shared { width: 1556px; height: 871px; background: #fdfdfd; color: #2c2c2c; }
.tabs { display: flex; align-items: center; height: 39px; background: #e3e3e3; font-size: 15.200px; letter-spacing: -.35px; }
.burger { margin-left: 18px; }
.home { margin: 0 8px 0 24px; }
.tab { display: flex; align-items: center; height: 27px; padding-left: 18.500px; border-left: 1px solid #b5b5b5; }
.t1 { width: 259px; }
.t2 { width: 255px; padding-left: 14.500px; letter-spacing: -.15px; }
.t3 { width: 256px; padding-left: 14.500px; letter-spacing: -.25px; }
.tab.on { width: 255px; height: 39px; padding-left: 14px; border: 0; border-radius: 6px 0 0; background: #fdfdfd; color: #222; }
.tab.on span { width: 188px; margin-left: 9px; }
.create { display: flex; align-items: center; gap: 12px; width: 84px; height: 29px; margin-left: 5px; padding-left: 11px; border: 1.500px solid #b5b5b5; border-radius: 6px; font-size: 13px; }
.appctl { display: flex; align-items: center; margin-left: 129px; }
.appctl svg:nth-child(2) { margin-left: 45px; }
.appctl svg:nth-child(3) { margin-left: 43.500px; }
.appctl svg:nth-child(4) { margin-left: 44px; }
.menu { display: flex; align-items: center; height: 59px; border-bottom: 1px solid #dadada; font-size: 15.300px; letter-spacing: -.25px; }
.m1 { width: 86px; margin-left: 19px; }
.m2 { width: 55px; }
.m3 { width: 84px; }
.m4 { width: 825px; }
.find { width: 127px; letter-spacing: -.35px; }
.micons { display: flex; align-items: center; padding-top: 1px; }
.micons i { width: 1px; height: 19px; margin: 0 20px 0 23px; background: #ddd; }
.micons i.b { margin: 0 18px 0 20px; }
.micons svg + svg { margin-left: 28px; }

.viewer { display: flex; height: 726px; }
.gutter { width: 131px; padding: 14px 16px; background: #f5f5f5; border-right: 1px solid #e3e3e3; }
.palette { display: flex; flex-direction: column; align-items: center; width: 48px; height: 306px; padding-top: 4px; border: 1.500px solid #bdbdbd; border-radius: 5px; background: #fdfdfd; }
.grip { flex: none; width: 39px; height: 5px; margin-bottom: 9px; border-radius: 2px; background: #aaa; }
.tool { position: relative; display: flex; flex: none; align-items: center; justify-content: center; width: 40px; height: 40px; margin-bottom: 8.700px; }
.tool::after { content: ""; position: absolute; right: 5px; bottom: 4px; border: 3px solid; border-color: transparent #2c2c2c #2c2c2c transparent; }
.sel { border-radius: 3px; background: #0265dc; }
.sel::after { border-color: transparent #fff #fff transparent; }

/* presentation page */
.slide { position: relative; width: 1292px; font-family: "Liberation Sans", sans-serif; color: #111; }
.slide h2 { height: 148px; padding: 43.500px 0 0 75px; font-size: 43px; line-height: 50px; font-weight: 700; color: #000; }
.figures { display: flex; gap: 105px; height: 285px; padding-left: 55px; }
.copy { padding-left: 73px; }
.l1, .l2 { font-size: 32.300px; line-height: 48px; height: 48px; }
.l1 { margin-top: -11px; }
.l2 b { display: inline-block; width: 17px; font-size: 27px; font-weight: 400; }
.l3 { height: 42.500px; padding-left: 30px; font-size: 25.080px; line-height: 43px; }
.l3 i { margin-right: 3px; font-style: normal; }
.slide footer { display: flex; align-items: center; margin-top: 37px; padding-left: 156px; height: 30px; color: #777; }
.copyright { width: 400px; font-size: 12.350px; }
.slide footer strong { width: 620px; font-size: 16.700px; color: #858585; }
.brand text { font: 500 24px Roboto, sans-serif; fill: #4b2a84; }
.brand .tall { font-size: 31px; }
.note { position: absolute; left: 267px; top: 266px; width: 768px; height: 187px; color: #fff8e8; }
.paper { position: absolute; left: 0; top: 0; }
.notetext { position: relative; padding-top: 15px; text-align: center; }
.notetext h3 { font-size: 32.200px; line-height: 42px; height: 41px; }
.notetext p { font-size: 26.900px; line-height: 32px; height: 32.400px; }
.notetext b { display: inline-block; width: 30px; font-weight: 400; text-align: left; font-size: 24px; }
.ibeam { position: absolute; left: 567px; top: 74px; }

.backdrop { width: 54px; background: #f5f5f5; border-left: 1.500px solid #cfcfcf; }
.scroll { display: flex; flex-direction: column; align-items: center; width: 20px; padding: 8px 0 6px; background: #efefef; border-right: 1.500px solid #dadada; }
.scroll i { width: 19px; height: 20px; margin: 304px 0 auto; background: #c9c9c9; }
.rail { display: flex; flex-direction: column; align-items: center; width: 58px; font-size: 15px; }
.r1 { margin-top: 19px; }
.r2, .r3 { margin-top: 26px; }
.page { width: 42px; height: 39px; margin-top: 246px; border: 1.500px solid #b9b9b9; border-radius: 5px; line-height: 35px; text-align: center; }
.total { height: 20px; margin-top: 11px; line-height: 20px; letter-spacing: -.6px; }
.r4 { margin-top: 31px; }
.r5 { margin-top: 34px; }
.hr { width: 40px; height: 1px; margin-top: 16px; background: #e2e2e2; }
.r6 { margin-top: 15px; }
.r7 { margin-top: 19px; }
.r8 { margin-top: 22px; }
.r9 { margin-top: 24px; }

.innerbar { display: flex; height: 47px; background: linear-gradient(90deg, #1f3a46, #21363f 35%, #1c3140 65%, #14274a); }
.istart { display: flex; align-items: center; justify-content: center; width: 59px; color: #fff; }
.isearch { display: flex; align-items: center; width: 349px; background: #f1f1f1; border-left: 1px solid #999; color: #222; font-size: 17.500px; letter-spacing: -.2px; }
.isearch > svg { margin-left: 14px; }
.isearch > span { width: 195px; margin-left: 14px; padding-top: 4px; color: #444; }
.tile { display: flex; align-items: center; justify-content: center; width: 88px; height: 38px; margin-left: 14px; border-radius: 5px; background: #e3e3e3; }
.iapps { display: flex; width: 718px; padding-top: 1px; }
.iapps div { display: flex; flex: none; align-items: center; justify-content: center; width: 59.500px; height: 46px; border: solid transparent; border-width: 0 5px; }
.iapps div:first-child { width: 62px; }
.iapps .run, .iapps .cur { background: linear-gradient(#3f82b8, #3f82b8) bottom / 100% 2px no-repeat padding-box; }
.iapps .cur { border: 0; background-color: #4a5c66; }
.pale { color: #c8d0d4; }
.c-blue { color: #1b87c4; }
.c-green { color: #38a32b; }
.c-orange { color: #b8673a; }
.itray { display: flex; align-items: center; justify-content: space-between; width: 165px; margin-left: 70px; padding-top: 1px; color: #eee; }
.stack { text-align: center; }
.innerbar .stack { font-size: 14.500px; letter-spacing: -.5px; line-height: 22px; padding-top: 4px; color: #e8ecf2; }
.innerbar .lang { width: 34px; margin-left: 9px; }
.innerbar .clock { width: 84px; margin-left: 4px; }
.inotif { margin: 9px 0 0 15px; }
.ipeek { width: 1px; height: 47px; margin-left: 3px; background: #7a879c; }

.presenter { position: absolute; left: 18px; top: 829px; display: flex; gap: 12px; }
.presenter span { display: flex; align-items: center; justify-content: center; height: 36px; border-radius: 5px; }
.who { width: 142px; background: #0f0f0f; font-size: 17px; letter-spacing: -.1px; }
.ghost { width: 98px; background: rgba(0, 0, 0, .5); }
.ghost svg { margin-left: -2px; }
.drawer { position: absolute; right: 6px; top: 747px; display: flex; align-items: center; justify-content: center; width: 44px; height: 130px; background: #333; }
.drawer svg { margin-left: -4px; }

/* desktop taskbar */
.taskbar { display: flex; height: 60px; background: linear-gradient(90deg, #2d4030, #2d4032 25%, #2c3a30 55%, #2e2c20 68%, #2d2f22 80%, #26372f 86%, #2d3020 92%, #2c2f1f); }
.start { display: flex; align-items: center; justify-content: center; width: 72px; }
.search { position: relative; display: flex; align-items: center; width: 432px; border: 2px solid #bdbdbd; background: #f2f2f2; color: #222; font-size: 22px; letter-spacing: -.25px; }
.search > svg:first-child { margin-left: 16px; }
.search span { margin-left: 18px; padding-top: 1px; }
.flag { position: absolute; left: 331px; top: -1px; }
.apps { display: flex; margin-left: -1px; }
.apps div { display: flex; align-items: center; justify-content: center; width: 75.500px; border: solid transparent; border-width: 0 7px; }
.apps .run, .apps .cur { background: linear-gradient(#76b9ed, #76b9ed) bottom / 100% 3px no-repeat padding-box; }
.apps .cur { width: 73px; padding-right: 5px; border: 0; background-color: #57655a; }
.white { color: #fff; }
.weather { display: flex; align-items: center; margin-left: 79px; font-size: 20px; letter-spacing: -.3px; }
.weather span { padding-top: 2px; }
.deg { width: 57px; margin-left: 9px; }
.tray { display: grid; grid-template-columns: repeat(7, 36px); place-items: center; margin-left: auto; }
.taskbar .stack { font-size: 17px; letter-spacing: -.5px; line-height: 28px; padding-top: 3px; }
.taskbar .lang { width: 40px; margin-left: 7px; }
.taskbar .clock { width: 100px; margin-left: 9px; }
.notif { display: flex; align-items: center; justify-content: center; width: 60px; margin-left: 2px; background: #3b3c31; }
.peek { width: 1px; height: 60px; margin: 0 8px 0 12px; background: #888; }
```
